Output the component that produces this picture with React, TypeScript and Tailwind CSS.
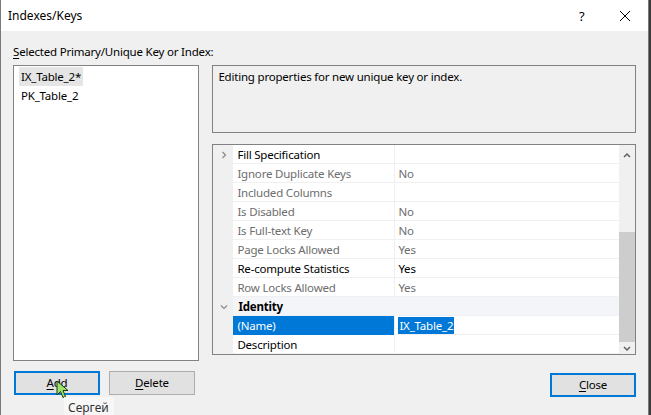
const font = { fontFamily: '"Segoe UI", "Noto Sans", "Open Sans", sans-serif' }

type Row = {
  name: string
  value?: string
  enabled?: boolean
  kind?: 'category' | 'expand' | 'selected'
}

const rows: Row[] = [
  { name: 'Fill Specification', enabled: true, kind: 'expand' },
  { name: 'Ignore Duplicate Keys', value: 'No' },
  { name: 'Included Columns' },
  { name: 'Is Disabled', value: 'No' },
  { name: 'Is Full-text Key', value: 'No' },
  { name: 'Page Locks Allowed', value: 'Yes' },
  { name: 'Re-compute Statistics', value: 'Yes', enabled: true },
  { name: 'Row Locks Allowed', value: 'Yes' },
  { name: 'Identity', kind: 'category', enabled: true },
  { name: '(Name)', value: 'IX_Table_2', kind: 'selected', enabled: true },
  { name: 'Description', enabled: true }
]

function Chevron({ down }: { down?: boolean }) {
  return (
    <svg width="8" height="8" viewBox="0 0 8 8" className="text-[#8a8a8a]">
      {down ? (
        <path d="M1 2.5 L4 5.5 L7 2.5" fill="none" stroke="currentColor" strokeWidth="1.2" />
      ) : (
        <path d="M2.5 1 L5.5 4 L2.5 7" fill="none" stroke="currentColor" strokeWidth="1.2" />
      )}
    </svg>
  )
}

function PropertyGrid() {
  return (
    <div className="mt-[11px] h-[211px] border border-[#828282] bg-white flex">
      <div className="flex-1 flex flex-col">
        {rows.map((r, i) => (
          <div key={i} className="h-[19px] flex shrink-0">
            <div className="w-[20px] bg-[#f0f0f0] flex items-center justify-center pl-[1px]">
              {r.kind === 'expand' && <Chevron />}
              {r.kind === 'category' && <Chevron down />}
            </div>
            {r.kind === 'category' ? (
              <div className="flex-1 bg-[#f3f5f9] border-b border-[#eef0f4] flex items-center pl-[5px] pt-[1px] font-bold text-black">
                {r.name}
              </div>
            ) : (
              <>
                <div
                  className={
                    r.kind === 'selected'
                      ? 'w-[161px] bg-[#0078d7] text-white flex items-center pl-[4px] pt-[1px] border-b border-[#0078d7]'
                      : `w-[161px] flex items-center pl-[4px] pt-[1px] border-b border-[#f0f0f0] ${r.enabled ? 'text-black' : 'text-[#6d6d6d]'}`
                  }
                >
                  {r.name}
                </div>
                <div
                  className={`flex-1 flex items-center pl-[3px] pt-[1px] border-l border-b border-[#f0f0f0] ${r.enabled ? 'text-black' : 'text-[#6d6d6d]'}`}
                >
                  {r.kind === 'selected' ? (
                    <span className="bg-[#0078d7] text-white px-[1px] leading-[17px]">{r.value}</span>
                  ) : (
                    r.value
                  )}
                </div>
              </>
            )}
          </div>
        ))}
      </div>
      <div className="w-[16px] bg-[#f0f0f0] flex flex-col">
        <div className="h-[19px] flex items-center justify-center">
          <svg width="8" height="6" viewBox="0 0 8 6">
            <path d="M1 5 L4 2 L7 5" fill="none" stroke="#606060" strokeWidth="1.5" />
          </svg>
        </div>
        <div className="h-[68px]" />
        <div className="h-[110px] bg-[#cdcdcd]" />
        <div className="flex-1 flex items-end justify-center pb-[2px]">
          <svg width="8" height="6" viewBox="0 0 8 6">
            <path d="M1 1 L4 4 L7 1" fill="none" stroke="#606060" strokeWidth="1.5" />
          </svg>
        </div>
      </div>
    </div>
  )
}

function Button({ label, mnemonic, focused }: { label: string; mnemonic: string; focused?: boolean }) {
  const rest = label.slice(1)
  return (
    <button
      className={`w-[86px] h-[24px] bg-[#e1e1e1] text-black flex items-center justify-center ${
        focused ? 'border-2 border-[#0078d7]' : 'border border-[#adadad]'
      }`}
    >
      <span>
        <span className="underline underline-offset-2">{mnemonic}</span>
        {rest}
      </span>
    </button>
  )
}

export default function App() {
  return (
    <div
      className="w-[651px] h-[415px] overflow-hidden bg-[#3c3c3c] text-[11.5px] leading-[16px] tracking-[-0.2px]"
      style={font}
    >
      <div className="relative w-[649px] h-[415px] border-l border-r border-[#7a7a7a] bg-[#f0f0f0]">
        <div className="h-[31px] bg-white flex items-center pl-[7px] text-black text-[12px] tracking-normal">
          <span className="flex-1">Indexes/Keys</span>
          <span className="w-[12px] text-[13px] mr-[28px]">?</span>
          <svg width="12" height="12" viewBox="0 0 12 12" className="mr-[17px]">
            <path d="M1 1 L11 11 M11 1 L1 11" stroke="#000" strokeWidth="1" />
          </svg>
        </div>
        <div className="pt-[13px] px-[12px]">
          <div className="text-black">
            <span className="underline underline-offset-2">S</span>elected Primary/Unique Key or Index:
          </div>
          <div className="mt-[5px] flex">
            <div className="w-[187px] flex flex-col">
              <div className="h-[296px] border border-[#828282] bg-white pt-[1px] pl-[5px]">
                <div className="inline-block bg-[#e5e5e5] h-[19px] leading-[19px] px-[2px]">IX_Table_2*</div>
                <div className="h-[20px] leading-[20px] px-[2px]">PK_Table_2</div>
              </div>
              <div className="mt-[10px] flex gap-[9px] pl-[1px]">
                <Button label="Add" mnemonic="A" focused />
                <Button label="Delete" mnemonic="D" />
              </div>
            </div>
            <div className="ml-[13px] w-[425px] flex flex-col">
              <div className="h-[68px] border border-[#828282] bg-[#f0f0f0] pl-[5px] pt-[3px] text-black">
                Editing properties for new unique key or index.
              </div>
              <PropertyGrid />
              <div className="mt-[18px] flex justify-end">
                <Button label="Close" mnemonic="C" focused />
              </div>
            </div>
          </div>
        </div>
        <svg width="14" height="20" viewBox="0 0 14 20" className="absolute left-[55px] top-[380px]">
          <path d="M1 1 L1 15 L4.5 11.5 L7 17.5 L9.5 16.5 L7 10.5 L12 10.5 Z" fill="#9be36b" stroke="#1a3a10" strokeWidth="1" />
        </svg>
        <div className="absolute left-[63px] top-[397px] h-[18px] w-[50px] bg-[#f7f7f7] pl-[4px] pt-[3px] text-[#333] text-[12px] tracking-normal">
          Сергей
        </div>
      </div>
    </div>
  )
}
